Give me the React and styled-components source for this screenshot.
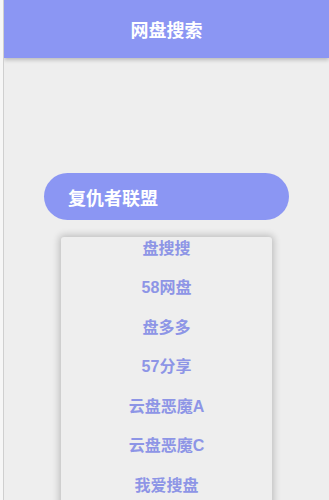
import React from "react";
import styled, { createGlobalStyle } from "styled-components";

const GlobalStyle = createGlobalStyle`
  html, body {
    margin: 0;
    padding: 0;
    background: #f6f6f6;
    font-family: "Liberation Sans", "Noto Sans CJK SC", sans-serif;
  }
`;

const Frame = styled.div`
  padding-left: 3px;
  background: #f6f6f6;
`;

const Screen = styled.div`
  border-left: 1px solid #cfcfcf;
  height: 500px;
  background: #eeeeee;
  overflow: hidden;
`;

const Header = styled.header`
  height: 58px;
  background: #8b96f3;
  box-shadow: 0 2px 4px rgba(0, 0, 0, 0.22);
  display: flex;
  align-items: center;
  justify-content: center;
  color: #ffffff;
  font-size: 18px;
  font-weight: 700;
  position: relative;
  z-index: 1;
`;

const Main = styled.main`
  padding: 115px 0 0 40px;
`;

const SearchPill = styled.div`
  width: 245px;
  height: 47px;
  box-sizing: border-box;
  border-radius: 24px;
  background: #8b96f3;
  padding-left: 24px;
  display: flex;
  align-items: center;
  color: #ffffff;
  font-size: 18px;
  font-weight: 700;
`;

const Dropdown = styled.div`
  margin: 17px 0 0 17px;
  width: 211px;
  height: 290px;
  background: #eeeeee;
  border-radius: 3px;
  box-shadow: 0 0 7px 2px rgba(0, 0, 0, 0.2);
  overflow: hidden;
`;

const List = styled.ul`
  list-style: none;
  margin: -10px 0 0;
  padding: 0;
`;

const Item = styled.li`
  height: 39.5px;
  display: flex;
  align-items: center;
  justify-content: center;
  color: #8d95e6;
  font-size: 16px;
  font-weight: 700;
`;

const sites = [
  "盘搜搜",
  "58网盘",
  "盘多多",
  "57分享",
  "云盘恶魔A",
  "云盘恶魔C",
  "我爱搜盘",
];

const App = () => (
  <Frame>
    <GlobalStyle />
    <Screen>
      <Header>网盘搜索</Header>
      <Main>
        <SearchPill>复仇者联盟</SearchPill>
        <Dropdown>
          <List>
            {sites.map((name) => (
              <Item key={name}>{name}</Item>
            ))}
          </List>
        </Dropdown>
      </Main>
    </Screen>
  </Frame>
);

export default App;
